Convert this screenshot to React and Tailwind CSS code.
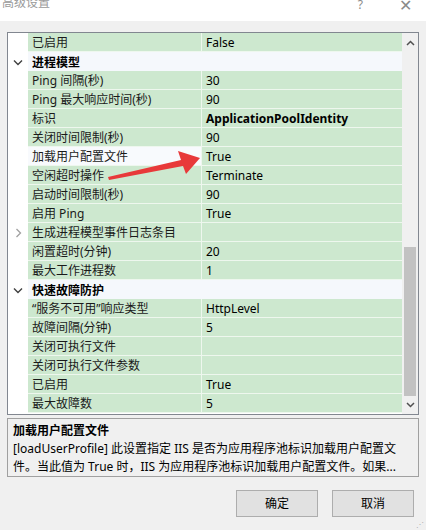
import React from "react";

const font = { fontFamily: '"Noto Sans", "Noto Sans CJK SC", sans-serif' };

const rows = [
  { name: "已启用", value: "False" },
  { cat: "进程模型" },
  { name: "Ping 间隔(秒)", value: "30" },
  { name: "Ping 最大响应时间(秒)", value: "90" },
  { name: "标识", value: "ApplicationPoolIdentity", bold: true },
  { name: "关闭时间限制(秒)", value: "90" },
  { name: "加载用户配置文件", value: "True", selected: true },
  { name: "空闲超时操作", value: "Terminate" },
  { name: "启动时间限制(秒)", value: "90" },
  { name: "启用 Ping", value: "True" },
  { name: "生成进程模型事件日志条目", value: "", collapsed: true },
  { name: "闲置超时(分钟)", value: "20" },
  { name: "最大工作进程数", value: "1" },
  { cat: "快速故障防护" },
  { name: "\u201C服务不可用\u201D响应类型", value: "HttpLevel" },
  { name: "故障间隔(分钟)", value: "5" },
  { name: "关闭可执行文件", value: "" },
  { name: "关闭可执行文件参数", value: "" },
  { name: "已启用", value: "True" },
  { name: "最大故障数", value: "5" },
];

function Chevron({ down }) {
  return down ? (
    <svg width="10" height="7" viewBox="0 0 10 7"><path d="M1 1.5 L5 5.5 L9 1.5" fill="none" stroke="#404040" strokeWidth="1.4" /></svg>
  ) : (
    <svg width="7" height="10" viewBox="0 0 7 10"><path d="M1.5 1 L5.5 5 L1.5 9" fill="none" stroke="#a0a0a0" strokeWidth="1.3" /></svg>
  );
}

function Row({ r }) {
  if (r.cat) {
    return (
      <div className="flex h-[19px] bg-[#f5f8fc]">
        <div className="w-[20px] bg-white flex items-center justify-center pt-[1px]"><Chevron down /></div>
        <div className="flex-1 pl-[4px] pt-[1px] font-bold text-[12px] leading-[19px] text-black">{r.cat}</div>
      </div>
    );
  }
  return (
    <div className="flex h-[19px]">
      <div className="w-[20px] bg-white flex items-center justify-center">{r.collapsed && <Chevron />}</div>
      <div className={`w-[174px] pl-[4px] pt-[1px] border-b border-r border-[#eef7ee] text-[12px] leading-[18px] text-[#1a1a1a] whitespace-nowrap ${r.selected ? "bg-[#f8fafd]" : "bg-[#cde8cf]"}`}>{r.name}</div>
      <div className={`flex-1 pl-[4px] pt-[1px] border-b border-[#eef7ee] bg-[#cde8cf] text-[12px] leading-[18px] text-black whitespace-nowrap ${r.bold ? "font-bold" : ""}`}>{r.value}</div>
    </div>
  );
}

export default function App() {
  return (
    <div className="w-[426px] h-[530px] bg-[#f0f0f0] relative overflow-hidden" style={font}>
      <div className="h-[21px] bg-white flex items-start justify-between">
        <div className="pl-[2px] -mt-[6px] text-[12px] leading-[18px] text-[#9a9a9a]">高级设置</div>
        <div className="flex items-start -mt-[4px] text-[#8a8a8a]">
          <span className="text-[12px] leading-[18px] mr-[36px]">?</span>
          <span className="text-[16px] leading-[18px] mr-[14px]">✕</span>
        </div>
      </div>

      <div className="px-[7px] pt-[11px]">
        <div className="h-[383px] border border-[#828790] bg-white flex">
          <div className="flex-1 flex flex-col">
            {rows.map((r, i) => <Row key={i} r={r} />)}
          </div>
          <div className="w-[16px] bg-[#f0f0f0] flex flex-col items-center">
            <div className="h-[19px] flex items-center justify-center">
              <svg width="9" height="6" viewBox="0 0 9 6"><path d="M1 5 L4.5 1.5 L8 5" fill="none" stroke="#505050" strokeWidth="1.5" /></svg>
            </div>
            <div className="h-[195px]" />
            <div className="w-[12px] h-[149px] bg-[#c2c2c2]" />
            <div className="flex-1 flex items-center justify-center">
              <svg width="9" height="6" viewBox="0 0 9 6"><path d="M1 1 L4.5 4.5 L8 1" fill="none" stroke="#505050" strokeWidth="1.5" /></svg>
            </div>
          </div>
        </div>

        <div className="mt-[3px] h-[59px] border border-[#a0a0a0] bg-[#f0f0f0] px-[5px] pt-[3px] text-[12px] leading-[18px] text-black whitespace-nowrap">
          <div className="font-bold">加载用户配置文件</div>
          <div>[loadUserProfile] 此设置指定 IIS 是否为应用程序池标识加载用户配置文</div>
          <div>件。当此值为 True 时，IIS 为应用程序池标识加载用户配置文件。如果...</div>
        </div>

        <div className="flex justify-end gap-[14px] mt-[13px] pr-[5px]">
          <button className="w-[82px] h-[27px] bg-[#e1e1e1] border border-[#adadad] text-[12px] text-black">确定</button>
          <button className="w-[82px] h-[27px] bg-[#e1e1e1] border border-[#adadad] text-[12px] text-black">取消</button>
        </div>
      </div>

      <svg className="absolute left-0 top-0 pointer-events-none" width="426" height="530" viewBox="0 0 426 530">
        <polygon points="108,177 181,160 178,151 200,158 186,174 183,166 109,180" fill="#e8393a" />
      </svg>

      <div className="absolute right-[2px] bottom-[2px] text-[8px] leading-none text-[#b0b0b0]">⋰</div>
    </div>
  );
}
